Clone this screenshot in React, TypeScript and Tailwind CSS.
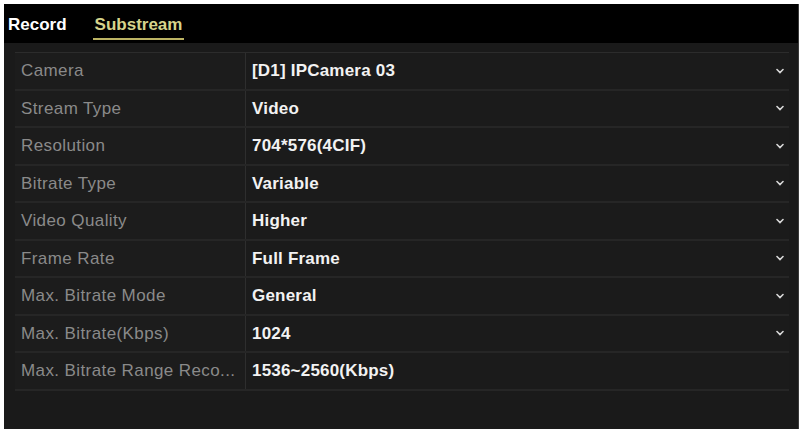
import React from 'react'

interface Row {
  label: string
  value: string
  dropdown: boolean
}

const rows: Row[] = [
  { label: 'Camera', value: '[D1] IPCamera 03', dropdown: true },
  { label: 'Stream Type', value: 'Video', dropdown: true },
  { label: 'Resolution', value: '704*576(4CIF)', dropdown: true },
  { label: 'Bitrate Type', value: 'Variable', dropdown: true },
  { label: 'Video Quality', value: 'Higher', dropdown: true },
  { label: 'Frame Rate', value: 'Full Frame', dropdown: true },
  { label: 'Max. Bitrate Mode', value: 'General', dropdown: true },
  { label: 'Max. Bitrate(Kbps)', value: '1024', dropdown: true },
  { label: 'Max. Bitrate Range Reco...', value: '1536~2560(Kbps)', dropdown: false },
]

const Chevron = () => (
  <svg width="8" height="6" viewBox="0 0 8 6" className="text-[#d8d8d8]">
    <path d="M1 1.5 L4 4.5 L7 1.5" fill="none" stroke="currentColor" strokeWidth="1.6" strokeLinecap="round" />
  </svg>
)

export default function App() {
  return (
    <div
      className="w-[801px] h-[431px] bg-white pt-[4px] pl-[4px] pr-[2px] pb-[2px]"
      style={{ fontFamily: '"Liberation Sans", Arial, sans-serif' }}
    >
      <div className="h-full flex flex-col bg-[#1a1a1a] border-r border-[#3a3a3a]">
        {/* Tabs */}
        <div className="h-[39px] bg-black flex items-stretch pl-[4px] gap-[26px]">
          <div className="flex items-center pt-[2px] text-[17px] font-bold text-white">Record</div>
          <div className="relative flex items-center pt-[2px] px-[2px] text-[17px] font-bold text-[#d6d48c]">
            Substream
            <div className="absolute left-0 right-0 bottom-[3px] h-[2px] bg-[#bcb464]" />
          </div>
        </div>

        {/* Settings table */}
        <div className="mt-[9px] ml-[11px] mr-[9px] border-t border-[#2c2c2c]">
          {rows.map((row) => (
            <div key={row.label} className="h-[37.5px] flex border-b-2 border-[#262626]">
              <div className="w-[231px] flex items-center pl-[6px] text-[17px] tracking-[0.4px] text-[#8a8a8a] border-r border-[#2e2e2e] bg-[#1c1c1c] whitespace-nowrap overflow-hidden">
                {row.label}
              </div>
              <div className="flex-1 flex items-center justify-between pl-[6px] pr-[5px] text-[17px] font-bold tracking-[0.2px] text-[#f2f2f2] bg-[#1b1b1b]">
                <span>{row.value}</span>
                {row.dropdown && <Chevron />}
              </div>
            </div>
          ))}
        </div>
      </div>
    </div>
  )
}
